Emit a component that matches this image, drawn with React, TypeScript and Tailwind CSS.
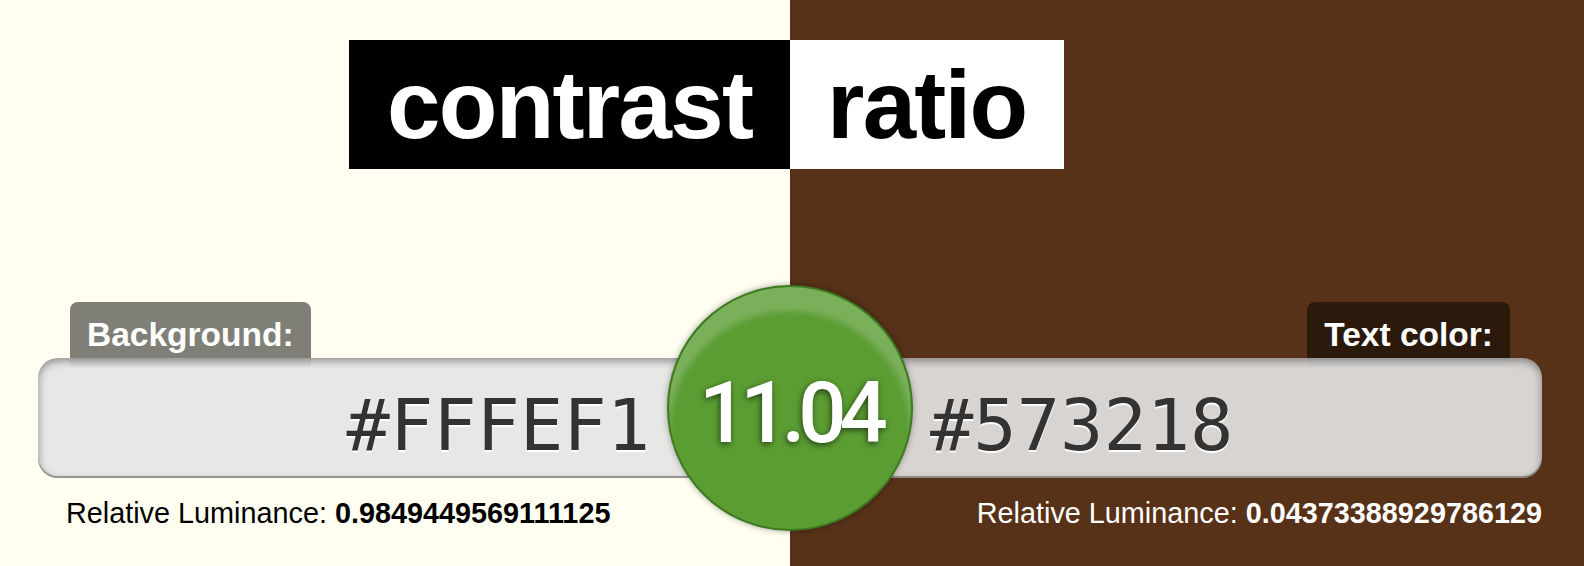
export default function App() {
  const lum = [
    { label: "Background:", hex: "#FFFEF1", value: "0.9849449569111125" },
    { label: "Text color:", hex: "#573218", value: "0.04373388929786129" },
  ];

  return (
    <div className="h-[566px] w-full overflow-hidden bg-[linear-gradient(to_right,#fffef1_790px,#573218_790px)] font-['Liberation_Sans',Arial,sans-serif]">
      <h1 className="flex pt-[40px] pl-[349px] text-[96px] font-bold leading-[107px] tracking-[-1.7px]">
        <span className="w-[441px] bg-black py-[11px] pl-[38px] text-white">contrast</span>
        <span className="w-[274px] bg-white py-[11px] pl-[37px] text-black">ratio</span>
      </h1>

      <main className="mt-[133px] pl-[38px] pr-[42px]">
        <div className="-mb-[8px] flex justify-between px-[32px]">
          <label className="rounded-t-[8px] bg-black/50 px-[17px] pt-[13px] pb-[12px] text-[33.5px] font-bold leading-[39px] text-white">
            {lum[0].label}
          </label>
          <label className="rounded-t-[8px] bg-black/50 px-[17px] pt-[13px] pb-[12px] text-[33.5px] font-bold leading-[39px] text-white">
            {lum[1].label}
          </label>
        </div>

        <div className="relative flex h-[120px] font-['DejaVu_Sans_Mono',monospace] text-[72px] leading-[106px] text-[#333] [text-shadow:0_2px_1px_#fff]">
          <div className="flex-1 rounded-l-[20px] bg-[rgba(229,229,228,0.91)] pt-[14px] pr-[139px] text-right shadow-[inset_0_3px_8px_rgba(0,0,0,0.4),inset_0_-2px_0_rgba(0,0,0,0.3)]">
            {lum[0].hex}
          </div>
          <div className="flex-1 rounded-r-[20px] bg-[rgba(229,229,228,0.91)] pt-[14px] pl-[141px] shadow-[inset_0_3px_8px_rgba(0,0,0,0.4),inset_0_-2px_0_rgba(0,0,0,0.3)]">
            {lum[1].hex}
          </div>

          <output className="absolute top-[-73px] left-1/2 h-[246px] w-[246px] -translate-x-1/2 rounded-full border-2 border-[#3e7a22] bg-[#5b9d33] pt-[10px] text-center font-['Roboto',Arial,sans-serif] text-[85px] font-medium leading-[232px] tracking-[-7px] text-white shadow-[inset_0_24px_6px_rgba(255,255,255,0.2),0_0_6px_rgba(0,0,0,0.35)] [text-shadow:-1px_2px_6px_rgba(0,0,0,0.6)]">
            11.04
          </output>
        </div>

        <div className="mt-[19px] flex justify-between text-[28.8px] leading-[32px]">
          <p className="pl-[28px] text-black">
            Relative Luminance: <strong className="font-bold">{lum[0].value}</strong>
          </p>
          <p className="text-white">
            Relative Luminance: <strong className="font-bold">{lum[1].value}</strong>
          </p>
        </div>
      </main>
    </div>
  );
}
